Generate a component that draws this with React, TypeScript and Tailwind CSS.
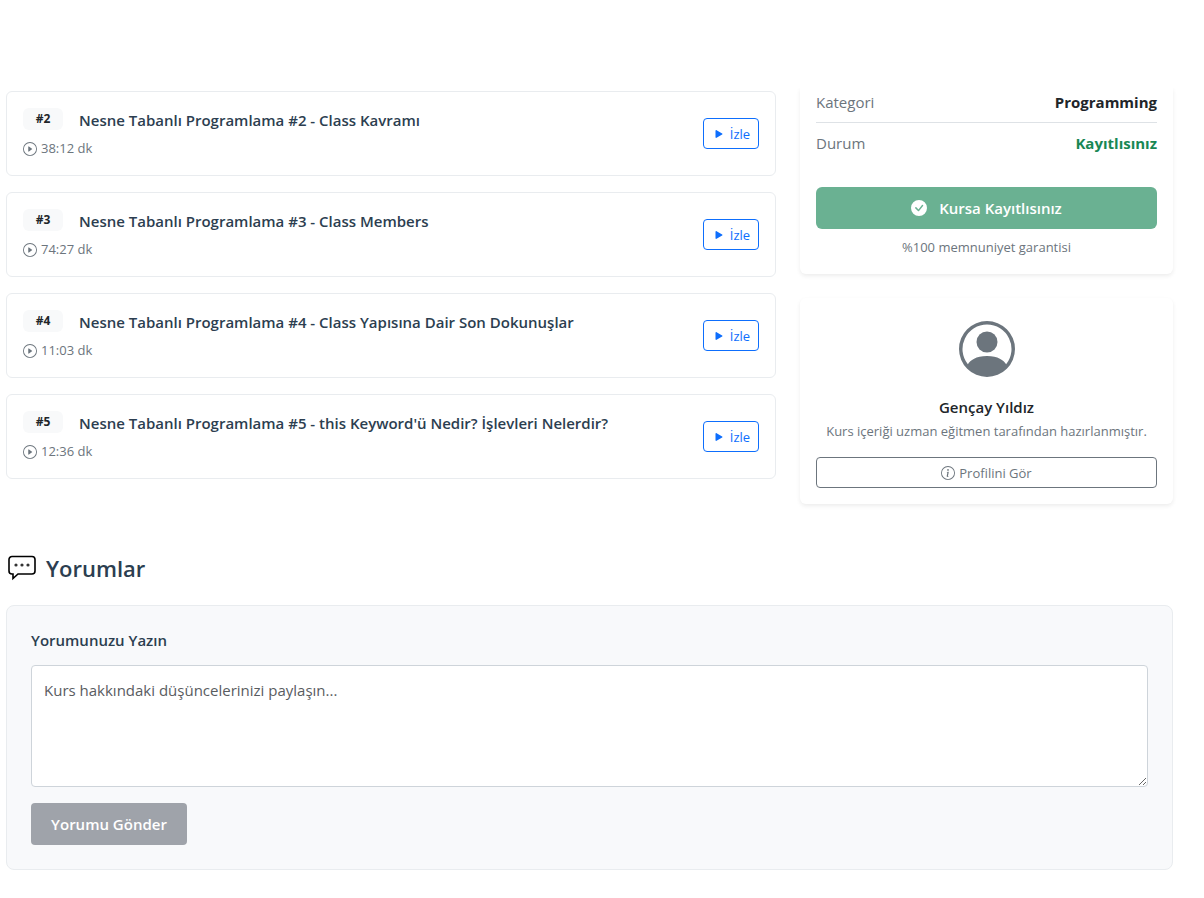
import { BsCheckCircleFill, BsInfoCircle, BsPersonCircle, BsPlayCircle, BsPlayFill } from "react-icons/bs";

type Lesson = { no: number; title: string; duration: string };

const lessons: Lesson[] = [
  { no: 2, title: "Nesne Tabanlı Programlama #2 - Class Kavramı", duration: "38:12" },
  { no: 3, title: "Nesne Tabanlı Programlama #3 - Class Members", duration: "74:27" },
  { no: 4, title: "Nesne Tabanlı Programlama #4 - Class Yapısına Dair Son Dokunuşlar", duration: "11:03" },
  { no: 5, title: "Nesne Tabanlı Programlama #5 - this Keyword'ü Nedir? İşlevleri Nelerdir?", duration: "12:36" },
];

function LessonCard({ lesson }: { lesson: Lesson }) {
  return (
    <li className="flex items-center justify-between rounded-md border border-[#e9ecef] bg-white p-4">
      <div>
        <div className="flex items-start gap-4">
          <span className="flex h-[22px] w-10 items-center justify-center rounded-md bg-[#f8f9fa] text-xs font-bold text-[#212529]">
            #{lesson.no}
          </span>
          <h3 className="text-[15px] leading-6 font-semibold text-[#2c3e50]">{lesson.title}</h3>
        </div>
        <p className="mt-1.5 flex items-center gap-1 text-[13px] leading-[21px] text-[#6c757d]">
          <BsPlayCircle className="size-3.5" />
          {lesson.duration} dk
        </p>
      </div>
      <button
        type="button"
        className="flex h-[31px] w-14 shrink-0 items-center justify-center gap-1 rounded border border-[#0d6efd] text-[13px] text-[#0d6efd]"
      >
        <BsPlayFill className="size-3.5" />
        İzle
      </button>
    </li>
  );
}

function SpeechBubble() {
  return (
    <svg viewBox="0 0 28 26" className="h-[26px] w-7" fill="none" aria-hidden="true">
      <path
        d="M4 1.5h20a3 3 0 0 1 3 3v11.500a3 3 0 0 1-3 3H10L5 23.500V19H4a3 3 0 0 1-3-3V4.500a3 3 0 0 1 3-3Z"
        stroke="#000"
        strokeWidth="1.6"
      />
      <circle cx="8" cy="10" r="1.600" fill="#333" />
      <circle cx="14" cy="10" r="1.600" fill="#333" />
      <circle cx="20" cy="10" r="1.600" fill="#333" />
    </svg>
  );
}

export default function App() {
  return (
    <div className="min-h-screen bg-white font-['Open_Sans','Noto_Sans',sans-serif] text-[15px] leading-6 text-[#212529]">
      <header className="relative z-10 h-[88px] bg-white" />
      <main className="pr-[31px] pb-7 pl-1.5">
        <div className="grid grid-cols-3 gap-6">
          <ul className="col-span-2 flex flex-col gap-4 pt-[3px]">
            {lessons.map((lesson) => (
              <LessonCard key={lesson.no} lesson={lesson} />
            ))}
          </ul>

          <aside className="flex flex-col gap-6">
            <section className="rounded-b-md bg-white px-4 pt-0.5 pb-4 shadow-[0_2px_4px_rgba(0,0,0,0.075)]">
              <dl>
                <div className="flex justify-between border-b border-[#dee2e6] pb-2">
                  <dt className="text-[#6c757d]">Kategori</dt>
                  <dd className="font-bold">Programming</dd>
                </div>
                <div className="flex justify-between pt-2">
                  <dt className="text-[#6c757d]">Durum</dt>
                  <dd className="font-bold text-[#198754]">Kayıtlısınız</dd>
                </div>
              </dl>
              <button
                type="button"
                disabled
                className="mt-8 flex h-[42px] w-full items-center justify-center gap-3 rounded-md bg-[#6ab192] font-semibold text-white"
              >
                <BsCheckCircleFill className="size-4" />
                Kursa Kayıtlısınız
              </button>
              <p className="mt-2 text-center text-[13px] leading-[21px] text-[#6c757d]">%100 memnuniyet garantisi</p>
            </section>

            <section className="rounded-md bg-white px-4 pt-[23px] pb-4 text-center shadow-[0_2px_4px_rgba(0,0,0,0.075)]">
              <BsPersonCircle className="mx-auto size-14 text-[#6c757d]" />
              <h3 className="mt-5 leading-5 font-semibold">Gençay Yıldız</h3>
              <p className="mt-1 text-[13px] leading-[21px] text-[#6c757d]">
                Kurs içeriği uzman eğitmen tarafından hazırlanmıştır.
              </p>
              <button
                type="button"
                className="mt-[15px] flex h-[31px] w-full items-center justify-center gap-1 rounded border border-[#6c757d] text-[13px] text-[#6c757d]"
              >
                <BsInfoCircle className="size-3.5" />
                Profilini Gör
              </button>
            </section>
          </aside>
        </div>

        <section className="mt-12">
          <h2 className="flex items-center gap-2.5 pl-0.5 text-[22px] leading-8 font-semibold text-[#2c3e50]">
            <SpeechBubble />
            Yorumlar
          </h2>
          <form className="mt-[21px] rounded-lg border border-[#e9ecef] bg-[#f8f9fb] p-6">
            <label htmlFor="comment" className="block leading-5 font-semibold text-[#2c3e50]">
              Yorumunuzu Yazın
            </label>
            <textarea
              id="comment"
              placeholder="Kurs hakkındaki düşüncelerinizi paylaşın..."
              className="mt-[15px] block h-[122px] w-full resize-y rounded border border-[#ced4da] bg-white p-3 leading-6 placeholder:text-[#595c5f]"
            />
            <button
              type="button"
              disabled
              className="mt-4 h-[42px] w-[156px] rounded bg-[#9fa3aa] font-semibold text-white"
            >
              Yorumu Gönder
            </button>
          </form>
        </section>
      </main>
    </div>
  );
}
